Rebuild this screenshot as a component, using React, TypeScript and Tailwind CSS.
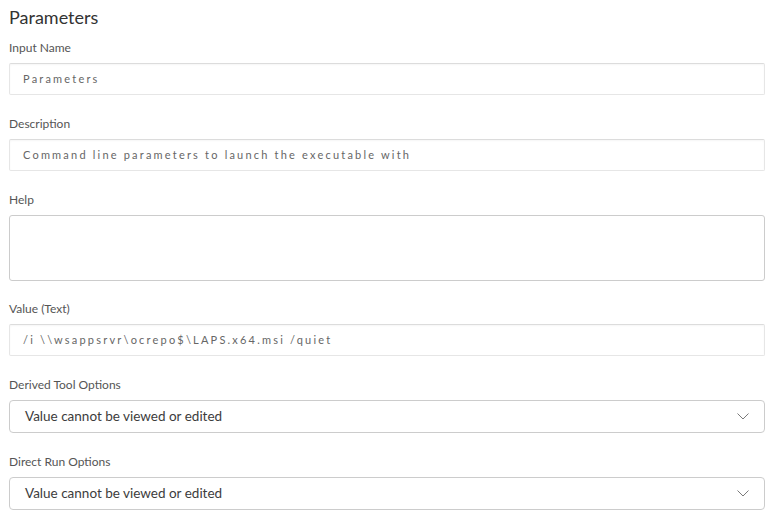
const font = { fontFamily: "Lato, 'Liberation Sans', sans-serif" };

const Label = ({ children }: { children: string }) => (
  <div className="text-[12px] leading-[17px] text-[#555] mb-[7px]">{children}</div>
);

const TextInput = ({ value }: { value: string }) => (
  <div className="h-[32px] border border-[#e6e6e6] border-t-[#dcdcdc] rounded-[2px] bg-white shadow-[inset_0_1px_2px_rgba(0,0,0,0.04)] flex items-center pl-[13px] text-[11px] tracking-[2.2px] text-[#666]">
    {value}
  </div>
);

const Select = () => (
  <div className="h-[33px] border border-[#cccccc] rounded-[4px] bg-white flex items-center justify-between pl-[15px] pr-[15px] text-[13.5px] text-[#3c3c3c]">
    <span>Value cannot be viewed or edited</span>
    <svg width="12" height="7" viewBox="0 0 12 7" fill="none" stroke="#7a7a7a" strokeWidth="1">
      <polyline points="0.5,0.5 6,6 11.5,0.5" />
    </svg>
  </div>
);

export default function App() {
  return (
    <div className="w-[780px] h-[530px] bg-white pl-[9px] pr-[15px] pt-[4px]" style={font}>
      <h2 className="text-[18px] leading-[26px] text-[#333] mb-[9px]">Parameters</h2>

      <Label>Input Name</Label>
      <TextInput value="Parameters" />

      <div className="mt-[20px]">
        <Label>Description</Label>
        <TextInput value="Command line parameters to launch the executable with" />
      </div>

      <div className="mt-[20px]">
        <Label>Help</Label>
        <div className="h-[66px] border border-[#cccccc] rounded-[3px] bg-white" />
      </div>

      <div className="mt-[19px]">
        <Label>Value (Text)</Label>
        <TextInput value="/i \\wsappsrvr\ocrepo$\LAPS.x64.msi /quiet" />
      </div>

      <div className="mt-[20px]">
        <Label>Derived Tool Options</Label>
        <Select />
      </div>

      <div className="mt-[20px]">
        <Label>Direct Run Options</Label>
        <Select />
      </div>
    </div>
  );
}
